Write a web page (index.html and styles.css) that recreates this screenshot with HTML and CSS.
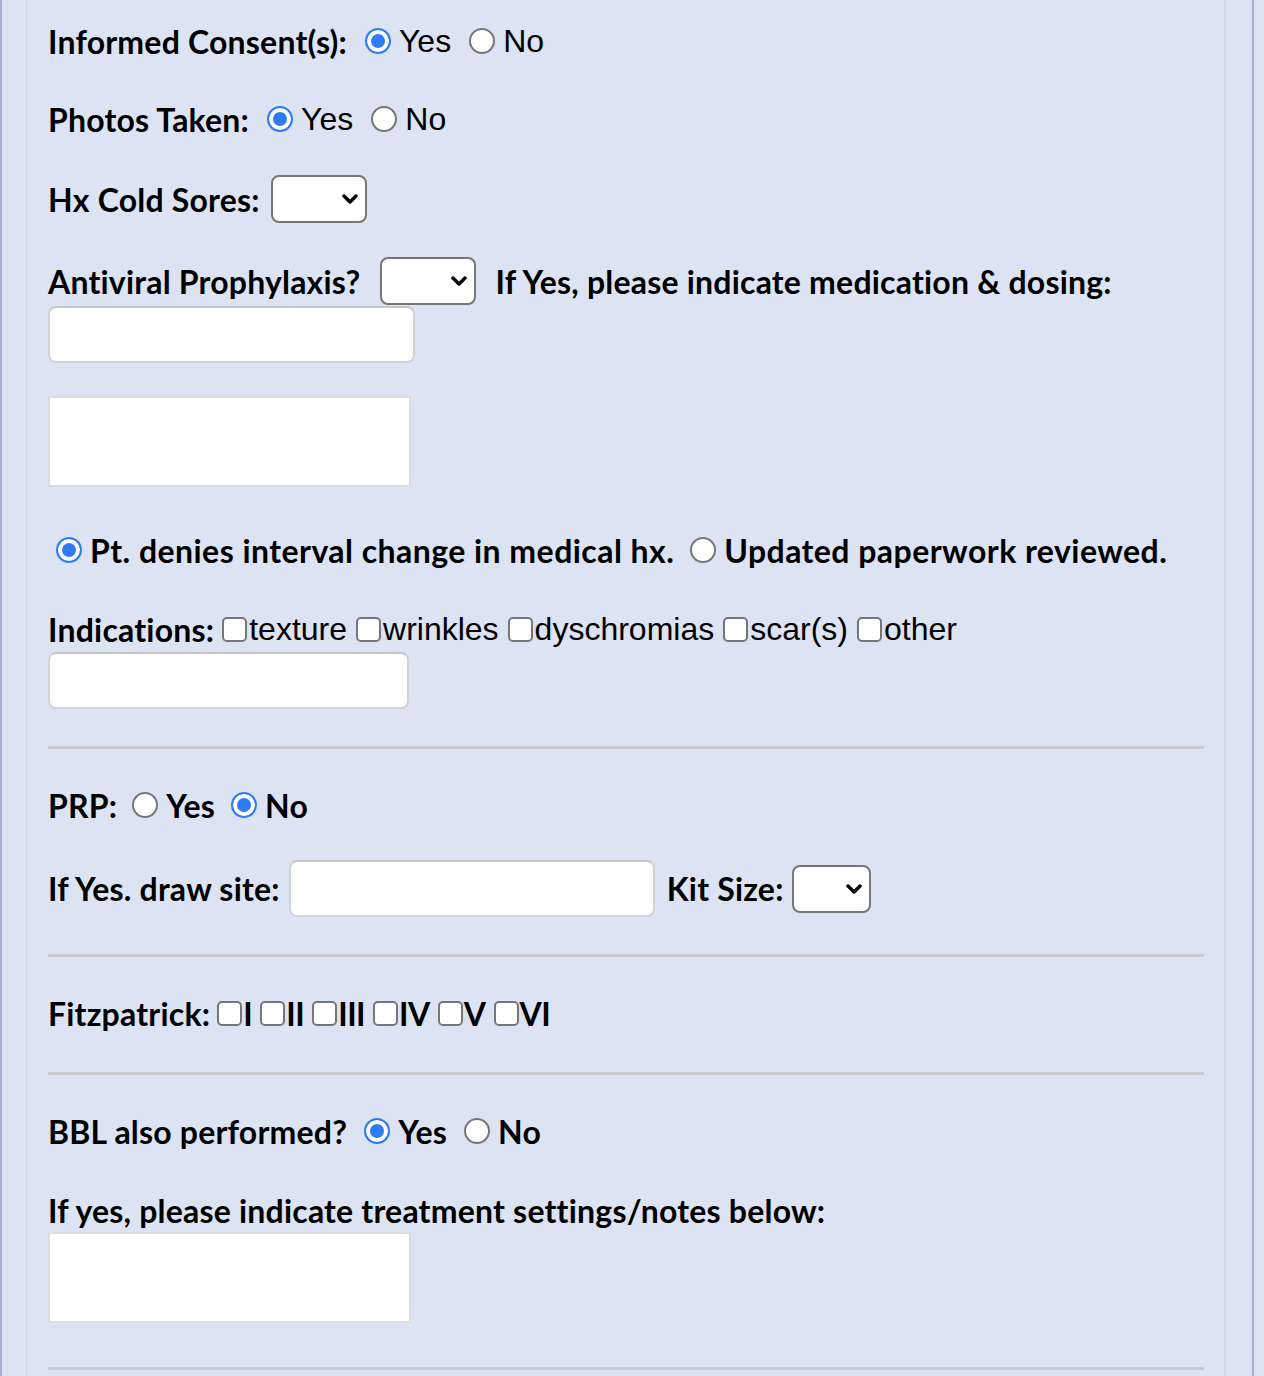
FILE: index.html
```html
<!DOCTYPE html>
<html lang="en">
<head>
<meta charset="utf-8">
<title>Treatment Note</title>
<link rel="stylesheet" href="styles.css">
</head>
<body>
<div class="frame">
  <div class="panel">
    <div class="row r1">
      <span class="lbl">Informed Consent(s):</span>
      <label class="opt"><input type="radio" name="ic" checked><span class="reg">Yes</span></label>
      <label class="opt"><input type="radio" name="ic"><span class="reg">No</span></label>
    </div>
    <div class="row r2">
      <span class="lbl">Photos Taken:</span>
      <label class="opt"><input type="radio" name="pt" checked><span class="reg">Yes</span></label>
      <label class="opt"><input type="radio" name="pt"><span class="reg">No</span></label>
    </div>
    <div class="row r3 sel-row">
      <span class="lbl">Hx Cold Sores:</span>
      <span class="selwrap w96"><select><option></option></select><svg class="chev" viewBox="0 0 16 10" width="16" height="10"><path d="M2 2 L8 8 L14 2" fill="none" stroke="#000" stroke-width="3.4" stroke-linecap="round" stroke-linejoin="round"/></svg></span>
    </div>
    <div class="row r4 sel-row">
      <span class="lbl">Antiviral Prophylaxis?</span>
      <span class="selwrap w96 ml"><select><option></option></select><svg class="chev" viewBox="0 0 16 10" width="16" height="10"><path d="M2 2 L8 8 L14 2" fill="none" stroke="#000" stroke-width="3.4" stroke-linecap="round" stroke-linejoin="round"/></svg></span>
      <span class="lbl ml2">If Yes, please indicate medication &amp; dosing:</span>
    </div>
    <input class="txt t-dose" type="text">
    <textarea class="area a1"></textarea>
    <div class="row r5">
      <label class="opt ind"><input type="radio" name="hx" checked><span class="lbl wide">Pt. denies interval change in medical hx.</span></label>
      <label class="opt"><input type="radio" name="hx"><span class="lbl wide">Updated paperwork reviewed.</span></label>
    </div>
    <div class="row r6 cbrow">
      <span class="lbl">Indications:</span>
      <label class="cb"><input type="checkbox"><span class="reg">texture</span></label>
      <label class="cb"><input type="checkbox"><span class="reg">wrinkles</span></label>
      <label class="cb"><input type="checkbox"><span class="reg">dyschromias</span></label>
      <label class="cb"><input type="checkbox"><span class="reg">scar(s)</span></label>
      <label class="cb"><input type="checkbox"><span class="reg">other</span></label>
    </div>
    <input class="txt t-ind" type="text">
    <div class="rule h1"></div>
    <div class="row r7 prp">
      <span class="lbl">PRP:</span>
      <label class="opt"><input type="radio" name="prp"><span class="lbl">Yes</span></label>
      <label class="opt"><input type="radio" name="prp" checked><span class="lbl">No</span></label>
    </div>
    <div class="row r8">
      <span class="lbl">If Yes. draw site:</span>
      <input class="txt t-site" type="text">
      <span class="lbl">Kit Size:</span>
      <span class="selwrap w78"><select><option></option></select><svg class="chev" viewBox="0 0 16 10" width="16" height="10"><path d="M2 2 L8 8 L14 2" fill="none" stroke="#000" stroke-width="3.4" stroke-linecap="round" stroke-linejoin="round"/></svg></span>
    </div>
    <div class="rule h2"></div>
    <div class="row r9 fitz">
      <span class="lbl">Fitzpatrick:</span>
      <label class="cb"><input type="checkbox"><span class="lbl num">I</span></label>
      <label class="cb"><input type="checkbox"><span class="lbl num">II</span></label>
      <label class="cb"><input type="checkbox"><span class="lbl num">III</span></label>
      <label class="cb"><input type="checkbox"><span class="lbl num">IV</span></label>
      <label class="cb"><input type="checkbox"><span class="lbl num">V</span></label>
      <label class="cb"><input type="checkbox"><span class="lbl num">VI</span></label>
    </div>
    <div class="rule h3"></div>
    <div class="row r10">
      <span class="lbl">BBL also performed?</span>
      <label class="opt"><input type="radio" name="bbl" checked><span class="lbl">Yes</span></label>
      <label class="opt"><input type="radio" name="bbl"><span class="lbl">No</span></label>
    </div>
    <div class="row r11">
      <span class="lbl">If yes, please indicate treatment settings/notes below:</span>
    </div>
    <textarea class="area a2"></textarea>
    <div class="rule h4"></div>
  </div>
</div>
</body>
</html>
```

FILE: styles.css
```css
* { box-sizing: border-box; }
html, body { margin: 0; padding: 0; }
body {
  background: #dce3f3;
  color: #000;
  font-family: "Liberation Sans", Arial, sans-serif;
}
.frame {
  width: 1254px;
  min-height: 1420px;
  border-left: 2px solid #a6b0d2;
  border-right: 2px solid #a6b0d2;
}
.panel {
  margin-left: 24px;
  margin-right: 26px;
  min-height: 1420px;
  border-left: 1px solid #d4d8e1;
  border-right: 2px solid #d4d8e1;
  padding: 0 20px 40px 21px;
  display: flex;
  flex-direction: column;
  align-items: flex-start;
}
.row {
  display: flex;
  align-items: center;
  height: 40px;
  white-space: nowrap;
}
.lbl {
  font-family: "Lato", "Liberation Sans", sans-serif;
  font-weight: 700;
  font-size: 32px;
  letter-spacing: 0.2px;
}
.lbl.wide { letter-spacing: 0.45px; }
.lbl.num { letter-spacing: -0.5px; }
.reg {
  font-family: "Liberation Sans", Arial, sans-serif;
  font-size: 32px;
}
.opt {
  display: inline-flex;
  align-items: center;
  gap: 8px;
  margin-left: 18px;
}
.r5 .opt.ind { margin-left: 8px; }
.r5 .opt + .opt { margin-left: 16px; }
.prp .opt { margin-left: 15px; }
.prp .opt + .opt { margin-left: 16px; }
.r10 .opt { margin-left: 17px; }

input[type="radio"] {
  appearance: none;
  -webkit-appearance: none;
  width: 26px;
  height: 26px;
  margin: 0;
  border: 2px solid #767676;
  border-radius: 50%;
  background: #fff;
  flex: none;
}
input[type="radio"]:checked {
  border-color: #2f7df6;
  background: #2f7df6;
  box-shadow: inset 0 0 0 4px #fff;
}
input[type="checkbox"] {
  appearance: none;
  -webkit-appearance: none;
  width: 25px;
  height: 25px;
  margin: 0;
  border: 2px solid #767676;
  border-radius: 5px;
  background: #fff;
  flex: none;
}
.cb {
  display: inline-flex;
  align-items: center;
  gap: 2px;
  margin-left: 9px;
}
.cbrow .cb:first-of-type { margin-left: 8px; }
.fitz .cb { margin-left: 8px; gap: 1px; }
.fitz .cb:first-of-type { margin-left: 7px; }

.selwrap {
  position: relative;
  display: inline-block;
  height: 48px;
  margin-left: 11px;
}
.selwrap.ml { margin-left: 19px; }
.ml2 { margin-left: 20px; }
.w96 { width: 96px; }
.w78 { width: 79px; }
.selwrap select {
  appearance: none;
  -webkit-appearance: none;
  width: 100%;
  height: 100%;
  border: 2px solid #767676;
  border-radius: 8px;
  background: #fff;
  margin: 0;
  padding: 0;
  display: block;
}
.chev {
  position: absolute;
  right: 9px;
  top: 19px;
  pointer-events: none;
}
.sel-row { height: 48px; }

.txt {
  display: block;
  height: 57px;
  margin: 0;
  border: 2px solid #d0d2d8;
  border-top-color: #c4c6cc;
  border-radius: 8px;
  background: #fff;
}
.area {
  display: block;
  margin: 0;
  border: 2px solid #dcdde2;
  border-radius: 0;
  background: #fff;
  width: 363px;
  height: 91px;
  resize: none;
}
.rule {
  align-self: stretch;
  height: 3px;
  background: #c9cbd1;
}

/* vertical rhythm */
.r1 { margin-top: 21px; }
.r2 { margin-top: 38px; }
.r3 { margin-top: 36px; }
.r4 { margin-top: 34px; }
.t-dose { margin-top: 1px; width: 367px; }
.a1 { margin-top: 33px; }
.r5 { margin-top: 43px; }
.r6 { margin-top: 39px; }
.t-ind { margin-top: 3px; width: 361px; }
.h1 { margin-top: 37px; }
.r7 { margin-top: 36px; }
.r8 { margin-top: 35px; height: 57px; }
.t-site { width: 366px; margin: 0 12px 0 9px; }
.r8 .selwrap { margin-left: 8px; }
.h2 { margin-top: 37px; }
.r9 { margin-top: 36px; }
.h3 { margin-top: 39px; }
.r10 { margin-top: 36px; }
.r11 { margin-top: 39px; }
.a2 { margin-top: 2px; }
.h4 { margin-top: 44px; }
```
